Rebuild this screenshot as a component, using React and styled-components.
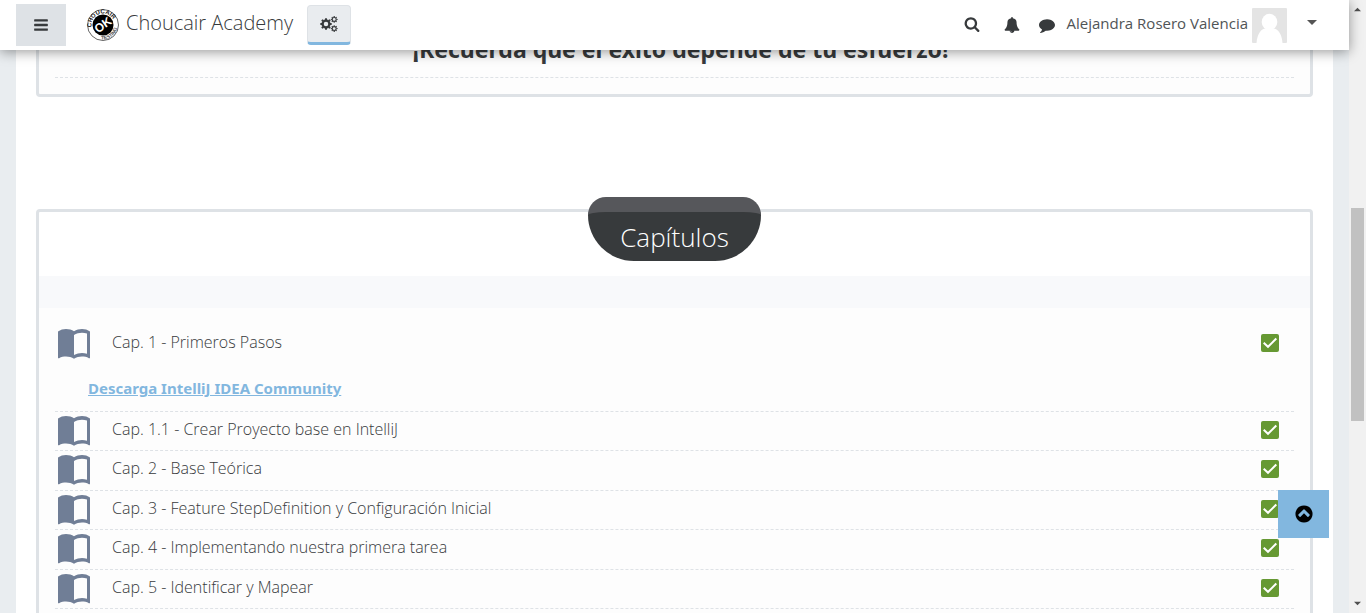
import React from "react";
import styled, { createGlobalStyle } from "styled-components";

const GlobalStyle = createGlobalStyle`
  *, *::before, *::after { box-sizing: border-box; }
  body {
    margin: 0;
    background: #e9edf0;
    color: #373a3c;
    font: 400 15px/24px "Open Sans", "Noto Sans", sans-serif;
  }
  h1, h2, ul { margin: 0; padding: 0; font-weight: inherit; }
  ul { list-style: none; }
  a { color: inherit; text-decoration: none; }
  button { border: 0; padding: 0; margin: 0; font: inherit; color: inherit; background: none; cursor: pointer; }
`;

const Shell = styled.div`
  display: flex;
  height: 100vh;
  overflow: hidden;
`;

const Page = styled.div`
  position: relative;
  flex: 1;
  min-width: 0;
`;

const Navbar = styled.header`
  position: absolute;
  inset: 0 0 auto;
  z-index: 2;
  display: flex;
  align-items: center;
  height: 50px;
  padding: 0 32px 0 16px;
  background: #fff;
  box-shadow: 0 2px 12px rgba(0, 0, 0, 0.4);
`;

const MenuButton = styled.button`
  display: grid;
  place-items: center;
  width: 50px;
  height: 42px;
  background: #dee2e6;
`;

const Brand = styled.a`
  display: flex;
  align-items: center;
  gap: 6px;
  margin: 0 14px 0 20px;
  font-size: 20px;
  font-weight: 300;
  line-height: 32px;
  span { padding-bottom: 4px; }
`;

const SettingsButton = styled.button`
  display: grid;
  place-items: center;
  width: 44px;
  height: 40px;
  background: #e9ecef;
  border: 1px solid #dee2e6;
  border-bottom: 3px solid #82b7df;
  border-radius: 4px;
`;

const UserTools = styled.div`
  display: flex;
  align-items: center;
  margin-left: auto;
`;

const ToolButton = styled.button`
  display: grid;
  place-items: center;
  width: 40px;
  height: 40px;
`;

const SearchButton = styled(ToolButton)`
  padding-bottom: 3px;
`;

const MessageButton = styled(ToolButton)`
  width: 30px;
`;

const UserMenu = styled.button`
  display: flex;
  align-items: center;
  gap: 4px;
  margin-left: 5px;
  color: #505456;
  span { padding-bottom: 4px; }
  svg:last-child { margin: 0 0 6px 16px; }
`;

const Content = styled.main`
  margin: 0 16px;
  padding: 0 20px;
  background: #fff;
`;

const Card = styled.section`
  border: 3px solid #dee2e6;
  border-radius: 4px;
  background: ${(p) => p.$background || "#fff"};
`;

const Reminder = styled.h2`
  margin: 0 16px 16px;
  padding: 32px 0 14px 12px;
  border-bottom: 1px dashed #dee2e6;
  font-family: "Noto Sans", "Open Sans", sans-serif;
  font-size: 23px;
  line-height: 28px;
  font-weight: 700;
  text-align: center;
`;

const Chapters = styled(Card)`
  margin-top: 112px;
`;

const ChapterTitle = styled.h2`
  width: fit-content;
  height: 64px;
  margin: -15px auto 15px;
  padding: 7px 32px 0;
  border-top: 15px solid #56575b;
  border-radius: 18px 18px 46px 46px;
  background: #373a3c;
  color: #fff;
  font-size: 26px;
  font-weight: 300;
  line-height: 36px;
`;

const Band = styled.div`
  height: 32px;
  background: #f8f9fb;
`;

const ListArea = styled.div`
  padding: 17px 16px 16px;
  background: #fdfdfd;
`;

const ActivityList = styled.ul`
  display: grid;
  grid-auto-rows: 1fr;
  min-height: ${(p) => p.$minHeight || 0}px;
`;

const Activity = styled.li`
  border-bottom: 1px dashed #dee2e6;
`;

const ActivityLine = styled.div`
  display: flex;
  align-items: center;
  height: 36px;
  padding: 0 15px 0 3px;
  font-size: 16px;
  font-weight: 300;
  a {
    display: flex;
    align-items: center;
    gap: 22px;
    margin-right: auto;
    padding-top: 2px;
  }
  span { padding-bottom: 4px; }
`;

const Note = styled.div`
  padding: 15px 33px 11px;
  font-family: "Noto Sans", "Open Sans", sans-serif;
  a {
    color: #82b7df;
    font-weight: 700;
    text-decoration: underline;
  }
`;

const Completion = styled.input`
  appearance: none;
  width: 18px;
  height: 18px;
  margin: 0;
  border-radius: 2px;
  background: #693;
`;

const CheckBox = styled.label`
  display: grid;
  > * { grid-area: 1 / 1; }
  svg { pointer-events: none; }
`;

const BackToTop = styled.a`
  position: absolute;
  right: 20px;
  bottom: 75px;
  z-index: 1;
  display: grid;
  place-items: center;
  width: 51px;
  height: 48px;
  background: #82b7df;
  color: #000;
`;

const ScrollTrack = styled.div`
  display: flex;
  flex-direction: column;
  align-items: center;
  width: 17px;
  padding: 7px 0;
  background: #f1f1f1;
`;

const ScrollSpace = styled.div`
  flex: ${(p) => p.$grow} 1 0;
`;

const ScrollThumb = styled(ScrollSpace)`
  width: 13px;
  background: #c1c1c1;
`;

const paths = {
  bars: "M1664 1344v128q0 26-19 45t-45 19h-1408q-26 0-45-19t-19-45v-128q0-26 19-45t45-19h1408q26 0 45 19t19 45zm0-512v128q0 26-19 45t-45 19h-1408q-26 0-45-19t-19-45v-128q0-26 19-45t45-19h1408q26 0 45 19t19 45zm0-512v128q0 26-19 45t-45 19h-1408q-26 0-45-19t-19-45v-128q0-26 19-45t45-19h1408q26 0 45 19t19 45z",
  search: "M1216 832q0-185-131.5-316.5t-316.5-131.5-316.5 131.5-131.5 316.5 131.5 316.5 316.5 131.5 316.5-131.5 131.5-316.5zm512 832q0 52-38 90t-90 38q-54 0-90-38l-343-342q-179 124-399 124-143 0-273.5-55.5t-225-150-150-225-55.5-273.5 55.5-273.5 150-225 225-150 273.5-55.5 273.5 55.5 225 150 150 225 55.5 273.5q0 220-124 399l343 343q37 37 37 90z",
  bell: "M912 1696q0-16-16-16-59 0-101.5-42.5t-42.5-101.5q0-16-16-16t-16 16q0 73 51.5 124.5t124.5 51.5q16 0 16-16zm816-288q0 52-38 90t-90 38h-448q0 106-75 181t-181 75-181-75-75-181h-448q-52 0-90-38t-38-90q50-42 91-88t85-119.5 74.5-158.5 50-206 19.5-260q0-152 117-282.5t307-158.5q-8-19-8-39 0-40 28-68t68-28 68 28 28 68q0 20-8 39 190 28 307 158.5t117 282.5q0 139 19.5 260t50 206 74.5 158.5 85 119.5 91 88z",
  comment: "M1792 896q0 174-120 321.5t-326 233-450 85.5q-70 0-145-8-198 175-460 242-49 14-114 22-17 2-30.5-9t-17.5-29v-1q-3-4-.5-12t2-10 4.5-9.5l6-9 7-8.5 8-9q7-8 31-34.5t34.5-38 31-39.5 32.5-51 27-59 26-76q-157-89-247.5-220t-90.5-281q0-130 71-248.5t191-204.5 286-136.5 348-50.5q244 0 450 85.5t326 233 120 321.5z",
  up: "M1293 1139l102-102q19-19 19-45t-19-45l-454-454q-19-19-45-19t-45 19l-454 454q-19 19-19 45t19 45l102 102q19 19 45 19t45-19l307-307 307 307q19 19 45 19t45-19zm371-243q0 209-103 385.5t-279.5 279.5-385.5 103-385.5-103-279.5-279.5-103-385.5 103-385.5 279.5-279.5 385.5-103 385.5 103 279.5 279.5 103 385.5z",
};

const Icon = ({ name, size = 16 }) => (
  <svg width={size} height={size} viewBox="0 0 1792 1792" fill="currentColor" aria-hidden="true">
    <path d={paths[name]} />
  </svg>
);

const Gear = ({ x, y, r, ring = 0.38 }) => (
  <g transform={`translate(${x} ${y}) scale(${r})`}>
    <circle r="0.58" fill="none" stroke="currentColor" strokeWidth={ring} />
    {[0, 45, 90, 135, 180, 225, 270, 315].map((angle) => (
      <path key={angle} d="M-.21-.68L-.15-1H.15L.21-.68Z" fill="currentColor" transform={`rotate(${angle})`} />
    ))}
  </g>
);

const CogsIcon = () => (
  <svg width="18" height="18" viewBox="0 0 18 18" aria-hidden="true">
    <Gear x={6} y={9} r={5.8} />
    <Gear x={14.2} y={4.4} r={3.4} ring={0.32} />
    <Gear x={14.2} y={13.6} r={3.4} ring={0.32} />
  </svg>
);

const BookIcon = () => (
  <svg width="32" height="30" viewBox="0 0 32 30" aria-hidden="true">
    <path
      fill="#707e96"
      fillRule="evenodd"
      d="M0 2.6C2.4.9 5.3.1 8 .1c3 0 5.900.7 8 2.200C18.400.8 21.200.1 24 .1c2.900 0 5.700.8 8 2.500V28.700c0 .5-.6.800-1.100.500C28.700 28 26.300 27.600 24 27.600c-2.900 0-5.700.8-8 2.200-2.200-1.400-5.100-2.200-8-2.200-2.300 0-4.700.4-6.900 1.600-.5.300-1.100 0-1.100-.5ZM16 6v20.100c2.300-1.300 5.400-2 8-2 1.700 0 3.400.2 5 .7V4.500C27.400 4 25.700 3.700 24 3.700c-2.700 0-5.800.9-8 2.300Z"
    />
  </svg>
);

const Caret = ({ up, width = 10, color = "#555" }) => (
  <svg width={width} height="5" viewBox="0 0 10 5" aria-hidden="true">
    <path d={up ? "M0 5L5 0L10 5Z" : "M0 0H10L5 5Z"} fill={color} />
  </svg>
);

const Avatar = () => (
  <svg width="35" height="35" viewBox="0 0 35 35" role="img" aria-label="Alejandra Rosero Valencia">
    <rect width="35" height="35" rx="1" fill="#e4e4e4" />
    <ellipse cx="17.500" cy="14" rx="7.800" ry="8.200" fill="#fff" />
    <path d="M4.500 35C5 26.500 9 21 13 20.500h9C26 21 30 26.500 30.500 35Z" fill="#fff" />
  </svg>
);

const Logo = () => (
  <svg width="34" height="34" viewBox="0 0 34 34" aria-hidden="true">
    <defs>
      <path id="ringTop" d="M5.500 17A11.500 11.500 0 0 1 28.500 17" />
      <path id="ringBottom" d="M2.500 17A14.500 14.500 0 0 0 31.500 17" />
    </defs>
    <circle cx="17" cy="17" r="15.500" fill="#fff" stroke="#666" strokeWidth="1" />
    <circle cx="17" cy="17" r="10.500" fill="#000" />
    <g fontFamily="Liberation Sans, sans-serif" fontWeight="700">
      <g textAnchor="middle">
        <text fontSize="6" fill="#222" transform="rotate(-20 17 17)">
          <textPath href="#ringTop" startOffset="50%">CHOUCAIR</textPath>
        </text>
        <text fontSize="5" fill="#555" transform="rotate(-35 17 17)">
          <textPath href="#ringBottom" startOffset="50%">TESTING</textPath>
        </text>
        <text x="17" y="21" fontSize="12" fill="#fff" transform="rotate(-35 17 17)">OK</text>
      </g>
    </g>
  </svg>
);

const ActivityRow = ({ title }) => (
  <ActivityLine>
    <a href="#capitulo">
      <BookIcon />
      <span>{title}</span>
    </a>
    <CheckBox>
      <Completion type="checkbox" defaultChecked aria-label={title} />
      <svg width="18" height="18" viewBox="0 0 18 18" aria-hidden="true">
        <path d="M2.700 8.700L7 12.800L15.300 4.500" fill="none" stroke="#fff" strokeWidth="2" />
      </svg>
    </CheckBox>
  </ActivityLine>
);

const chapters = [
  "Cap. 1.1 - Crear Proyecto base en IntelliJ",
  "Cap. 2 - Base Teórica",
  "Cap. 3 - Feature StepDefinition y Configuración Inicial",
  "Cap. 4 - Implementando nuestra primera tarea",
  "Cap. 5 - Identificar y Mapear",
];

export default function App() {
  return (
    <Shell>
      <GlobalStyle />
      <Page>
        <Navbar>
          <MenuButton aria-label="Menú"><Icon name="bars" /></MenuButton>
          <Brand href="#inicio">
            <Logo />
            <span>Choucair Academy</span>
          </Brand>
          <SettingsButton aria-label="Ajustes"><CogsIcon /></SettingsButton>
          <UserTools>
            <SearchButton aria-label="Buscar"><Icon name="search" /></SearchButton>
            <ToolButton aria-label="Notificaciones"><Icon name="bell" /></ToolButton>
            <MessageButton aria-label="Mensajes"><Icon name="comment" /></MessageButton>
            <UserMenu>
              <span>Alejandra Rosero Valencia</span>
              <Avatar />
              <Caret />
            </UserMenu>
          </UserTools>
        </Navbar>
        <Content>
          <Card $background="#fdfdfd">
            <Reminder>¡Recuerda que el éxito depende de tu esfuerzo!</Reminder>
          </Card>
          <Chapters>
            <ChapterTitle>Capítulos</ChapterTitle>
            <Band />
            <ListArea>
              <ActivityList>
                <Activity>
                  <ActivityRow title="Cap. 1 - Primeros Pasos" />
                  <Note><a href="#descarga">Descarga IntelliJ IDEA Community</a></Note>
                </Activity>
              </ActivityList>
              <ActivityList $minHeight={197}>
                {chapters.map((title) => (
                  <Activity key={title}><ActivityRow title={title} /></Activity>
                ))}
              </ActivityList>
            </ListArea>
          </Chapters>
        </Content>
        <BackToTop href="#inicio" aria-label="Subir"><Icon name="up" size={20} /></BackToTop>
      </Page>
      <ScrollTrack>
        <Caret up width={7} color="#505050" />
        <ScrollSpace $grow={196} />
        <ScrollThumb $grow={213} />
        <ScrollSpace $grow={180} />
        <Caret width={7} color="#505050" />
      </ScrollTrack>
    </Shell>
  );
}
